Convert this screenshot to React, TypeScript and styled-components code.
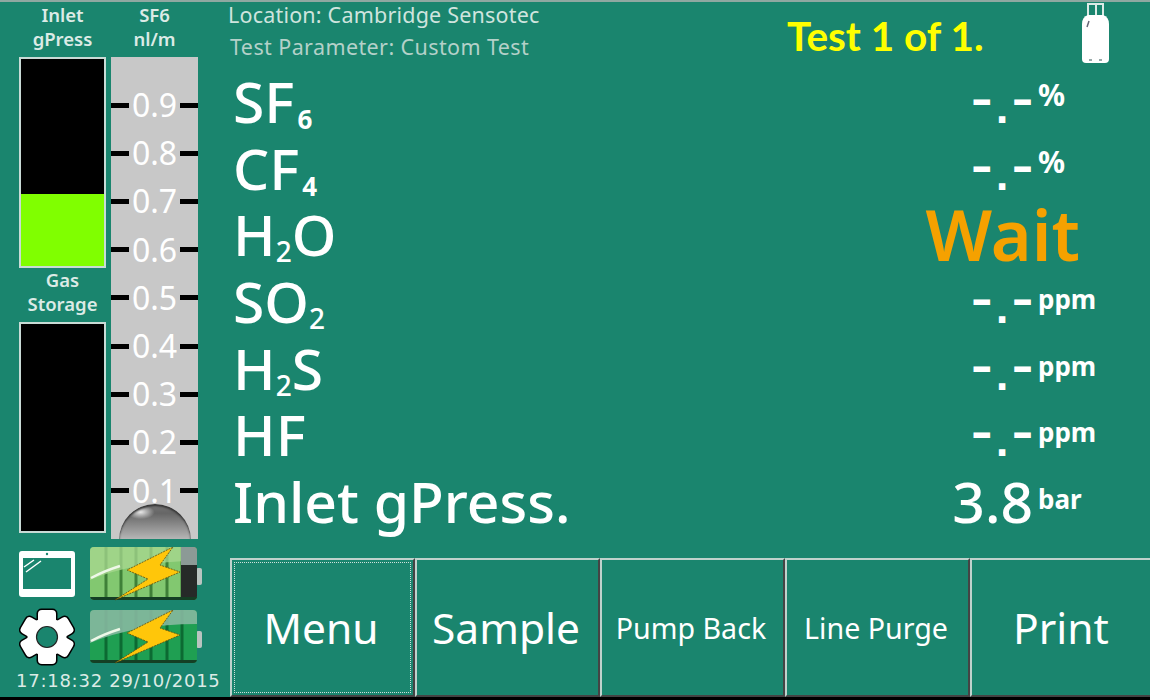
import React from 'react';
import styled, { createGlobalStyle } from 'styled-components';

const GlobalStyle = createGlobalStyle`
  html, body {
    margin: 0;
    padding: 0;
    background: #1a856e;
  }
  * {
    box-sizing: border-box;
  }
`;

const Screen = styled.div`
  width: 1150px;
  height: 700px;
  display: flex;
  overflow: hidden;
  background: #1a856e;
  border-top: 2px solid #8fa8a1;
  border-bottom: 3px solid #000;
  font-family: "Noto Sans", "DejaVu Sans", sans-serif;
  color: #fff;
`;

const Side = styled.aside`
  width: 229px;
  flex: none;
  padding: 1px 0 0 19px;
  display: flex;
  flex-direction: column;
`;

const GaugeGrid = styled.div`
  display: grid;
  grid-template-columns: 87px 87px;
  column-gap: 5px;
  height: 536px;
`;

const GaugeColumn = styled.div`
  display: flex;
  flex-direction: column;
  min-height: 0;
`;

const Caption = styled.div<{ $height: number }>`
  height: ${p => p.$height}px;
  flex: none;
  text-align: center;
  font-size: 18.5px;
  line-height: 24px;
  font-weight: 600;
  color: #dcebe6;
  white-space: nowrap;
`;

const Gauge = styled.div<{ $height: number }>`
  height: ${p => p.$height}px;
  flex: none;
  background: #000;
  border: 2px solid #c9dbd6;
  display: flex;
  flex-direction: column;
  justify-content: flex-end;
`;

const GaugeFill = styled.div`
  background: #80ff00;
`;

const Scale = styled.div`
  position: relative;
  height: 482px;
  background: #c8c8c8;
  padding-top: 24px;
  overflow: hidden;
`;

const ScaleRow = styled.div`
  height: 48.2px;
  display: flex;
  align-items: center;
  justify-content: space-between;
`;

const Tick = styled.span`
  width: 18px;
  height: 5px;
  background: #000;
`;

const ScaleValue = styled.span`
  font-size: 32px;
  line-height: 1;
  color: #fff;
`;

const Bulb = styled.div`
  position: absolute;
  left: 8px;
  bottom: -2px;
  width: 72px;
  height: 37px;
  border-radius: 36px 36px 0 0;
  background:
    radial-gradient(ellipse 14px 7px at 30% 22%, rgba(255, 255, 255, 0.85), rgba(255, 255, 255, 0) 100%),
    linear-gradient(#777 0%, #666 25%, #8e8e8e 60%, #bcbcbc 100%);
  box-shadow: inset 0 2px 2px #333;
`;

const StatusGrid = styled.div`
  display: grid;
  grid-template-columns: 71px 112px;
  grid-auto-rows: 54px;
  row-gap: 9px;
  margin-top: 8px;
`;

const IconCell = styled.div`
  display: flex;
  align-items: center;
`;

const Clock = styled.div`
  margin: 7px 0 0 -3px;
  font-family: "DejaVu Sans", sans-serif;
  font-size: 18px;
  letter-spacing: 0.75px;
  line-height: 20px;
  color: #dcebe6;
  white-space: nowrap;
`;

const Main = styled.main`
  flex: 1;
  min-width: 0;
  display: flex;
  flex-direction: column;
`;

const Header = styled.header`
  height: 67px;
  flex: none;
  display: flex;
  align-items: flex-start;
`;

const Info = styled.div`
  width: 558px;
  flex: none;
`;

const InfoLine = styled.div<{ $dim?: boolean }>`
  height: 32px;
  font-size: 21.5px;
  letter-spacing: ${p => (p.$dim ? 0.4 : 0.2)}px;
  line-height: 26px;
  color: ${p => (p.$dim ? '#b4d1c9' : '#cfe4de')};
  margin-left: ${p => (p.$dim ? 1 : -1)}px;
  white-space: nowrap;
`;

const TestCount = styled.div`
  margin-top: 10px;
  font-family: "Lato", sans-serif;
  font-weight: 700;
  font-size: 40.5px;
  line-height: 48px;
  color: #ffff00;
  white-space: nowrap;
`;

const BottleSlot = styled.div`
  margin-left: auto;
  margin-right: 40px;
  margin-top: 1px;
  display: flex;
`;

const Rows = styled.section`
  flex: 1;
  min-height: 0;
`;

const Row = styled.div`
  height: 66.7px;
  padding-left: 4px;
  display: flex;
  align-items: baseline;
`;

const Label = styled.div`
  flex: 1;
  font-size: 57px;
  font-weight: 500;
  line-height: 64px;
  white-space: nowrap;
`;

const Sub = styled.sub<{ $bold?: boolean }>`
  margin-left: ${p => (p.$bold ? 3 : 0)}px;
  font-size: ${p => (p.$bold ? 26 : 28)}px;
  font-weight: ${p => (p.$bold ? 700 : 500)};
  line-height: 0;
  vertical-align: -6px;
`;

const Value = styled.div`
  font-size: 57px;
  font-weight: 500;
  line-height: 64px;
  white-space: nowrap;
`;

const EmptyValue = styled.div`
  font-family: "DejaVu Sans", sans-serif;
  font-size: 36px;
  font-weight: 700;
  line-height: 64px;
  white-space: nowrap;
`;

const Dash = styled.span`
  font-size: 42px;
  vertical-align: 9px;
  line-height: 0;
`;

const Dot = styled.span`
  margin: 0 3px;
`;

const Unit = styled.div<{ $symbol?: boolean }>`
  align-self: flex-start;
  width: 117px;
  flex: none;
  margin-top: ${p => (p.$symbol ? 11 : 15)}px;
  padding-left: 5px;
  font-size: ${p => (p.$symbol ? 30 : 26)}px;
  font-weight: 700;
  line-height: 30px;
`;

const Wait = styled.div`
  align-self: flex-start;
  margin-right: 70px;
  font-size: 70px;
  font-weight: 600;
  line-height: 64px;
  color: #f5a100;
`;

const Footer = styled.footer`
  height: 139px;
  flex: none;
  display: flex;
  margin-top: auto;
  padding-left: 1px;
`;

const SoftKey = styled.button<{ $small?: boolean; $focused?: boolean }>`
  position: relative;
  width: 185px;
  flex: none;
  margin: 0;
  padding: 0 3px 0 0;
  background: #1a856e;
  color: #fff;
  border-style: solid;
  border-width: 2px;
  border-color: #bfd2cc #444 #444 #bfd2cc;
  font-family: inherit;
  font-size: ${p => (p.$small ? 28.6 : 42.5)}px;
  white-space: nowrap;

  ${p =>
    p.$focused &&
    `&::after {
      content: '';
      position: absolute;
      inset: 2px;
      border: 1px dotted #cfe0db;
    }`}
`;

function Battery({ id, full }: { id: string; full?: boolean }) {
  const light = full ? '#86b8a0' : '#a8d890';
  const mid = full ? '#1f9f52' : '#82c870';
  const sep = full ? '#0c6a32' : '#3f8038';
  return (
    <svg width="112" height="54" viewBox="0 0 112 54">
      <defs>
        <clipPath id={id}>
          <rect x="0" y="0" width="107" height="53" rx="4" />
        </clipPath>
      </defs>
      <rect x="106" y="21" width="6" height="17" rx="2" fill="#b9c4c0" />
      <g clipPath={`url(#${id})`}>
        <rect width="107" height="53" fill={mid} />
        {[16, 31, 46, 61, 77, 92].map(x => (
          <rect key={x} x={x - 1.5} y="0" width="3" height="53" fill={sep} />
        ))}
        {!full && <rect x="91" y="0" width="16" height="53" fill="#262a28" />}
        <path d="M0 33 Q45 14 107 14 L107 0 L0 0 Z" fill={light} opacity={full ? 0.9 : 0.75} />
        {!full && <path d="M91 0 H107 V18 H91 Z" fill="#8c9a96" />}
        <path d="M1 31 Q14 24 30 19" stroke="#eef8e8" strokeWidth="2.5" fill="none" />
        <rect y="50" width="107" height="3" fill="#143f24" />
      </g>
      <polygon
        points="83,0 37,23 58,32 25,53 90,25 70,18"
        fill="#ffc60a"
        stroke="#5a4a10"
        strokeWidth="0.8"
        strokeDasharray="2 1"
      />
    </svg>
  );
}

function TabletIcon() {
  return (
    <svg width="56" height="46" viewBox="0 0 56 46">
      <path
        fillRule="evenodd"
        d="M3 0 H53 Q56 0 56 3 V43 Q56 46 53 46 H3 Q0 46 0 43 V3 Q0 0 3 0 Z M4 7 V38 H52 V7 Z"
        fill="#fff"
      />
      <circle cx="28" cy="3" r="1.2" fill="#1a856e" />
      <path d="M5 16 L15 9 M7 21 L22 10" stroke="#fff" strokeWidth="1.5" />
    </svg>
  );
}

function GearIcon() {
  const angles = [0, 60, 120, 180, 240, 300];
  return (
    <svg width="56" height="58" viewBox="-28 -29 56 58">
      <g fill="#000">
        {angles.map(a => (
          <rect key={a} x="-10.5" y="-28.5" width="21" height="20" rx="5" transform={`rotate(${a})`} />
        ))}
        <circle r="21" />
      </g>
      <g fill="#fff">
        {angles.map(a => (
          <rect key={a} x="-9" y="-27" width="18" height="20" rx="4" transform={`rotate(${a})`} />
        ))}
        <circle r="19.5" />
      </g>
      <circle r="10.5" fill="#1a856e" stroke="#222" strokeWidth="1.2" />
    </svg>
  );
}

function BottleIcon() {
  return (
    <svg width="28" height="60" viewBox="0 0 28 60">
      <path d="M5 1 H22 M6 1 V13 M14 1 V13 M21 1 V13" stroke="#dcebe6" strokeWidth="2" fill="none" />
      <path
        d="M6 12 H21 Q27 14 27 21 V56 Q27 60 23 60 H4 Q0 60 0 56 V21 Q0 14 6 12 Z"
        fill="#fff"
      />
      <path d="M7 18 L5 24" stroke="#667" strokeWidth="1.5" />
      <rect x="7" y="56" width="3" height="2" fill="#9aa" />
      <rect x="17" y="56" width="3" height="2" fill="#9aa" />
    </svg>
  );
}

const scale = ['0.9', '0.8', '0.7', '0.6', '0.5', '0.4', '0.3', '0.2', '0.1'];

function Blank() {
  return (
    <EmptyValue>
      <Dash>–</Dash>
      <Dot>.</Dot>
      <Dash>–</Dash>
    </EmptyValue>
  );
}

export default function App() {
  return (
    <Screen>
      <GlobalStyle />
      <Side>
        <GaugeGrid>
          <GaugeColumn>
            <Caption $height={54}>Inlet<br />gPress</Caption>
            <Gauge $height={211}>
              <GaugeFill style={{ height: `${(72 / 207) * 100}%` }} />
            </Gauge>
            <Caption $height={54}>Gas<br />Storage</Caption>
            <Gauge $height={211} />
          </GaugeColumn>
          <GaugeColumn>
            <Caption $height={54}>SF6<br />nl/m</Caption>
            <Scale>
              {scale.map(v => (
                <ScaleRow key={v}>
                  <Tick />
                  <ScaleValue>{v}</ScaleValue>
                  <Tick />
                </ScaleRow>
              ))}
              <Bulb />
            </Scale>
          </GaugeColumn>
        </GaugeGrid>
        <StatusGrid>
          <IconCell><TabletIcon /></IconCell>
          <IconCell><Battery id="battery-a" /></IconCell>
          <IconCell><GearIcon /></IconCell>
          <IconCell><Battery id="battery-b" full /></IconCell>
        </StatusGrid>
        <Clock>17:18:32 29/10/2015</Clock>
      </Side>
      <Main>
        <Header>
          <Info>
            <InfoLine>Location: Cambridge Sensotec</InfoLine>
            <InfoLine $dim>Test Parameter: Custom Test</InfoLine>
          </Info>
          <TestCount>Test 1 of 1.</TestCount>
          <BottleSlot><BottleIcon /></BottleSlot>
        </Header>
        <Rows>
          <Row>
            <Label>SF<Sub $bold>6</Sub></Label>
            <Blank />
            <Unit $symbol>%</Unit>
          </Row>
          <Row>
            <Label>CF<Sub $bold>4</Sub></Label>
            <Blank />
            <Unit $symbol>%</Unit>
          </Row>
          <Row>
            <Label>H<Sub>2</Sub>O</Label>
            <Wait>Wait</Wait>
          </Row>
          <Row>
            <Label>SO<Sub>2</Sub></Label>
            <Blank />
            <Unit>ppm</Unit>
          </Row>
          <Row>
            <Label>H<Sub>2</Sub>S</Label>
            <Blank />
            <Unit>ppm</Unit>
          </Row>
          <Row>
            <Label>HF</Label>
            <Blank />
            <Unit>ppm</Unit>
          </Row>
          <Row>
            <Label>Inlet gPress.</Label>
            <Value>3.8</Value>
            <Unit>bar</Unit>
          </Row>
        </Rows>
        <Footer>
          <SoftKey $focused>Menu</SoftKey>
          <SoftKey>Sample</SoftKey>
          <SoftKey $small>Pump Back</SoftKey>
          <SoftKey $small>Line Purge</SoftKey>
          <SoftKey>Print</SoftKey>
        </Footer>
      </Main>
    </Screen>
  );
}
